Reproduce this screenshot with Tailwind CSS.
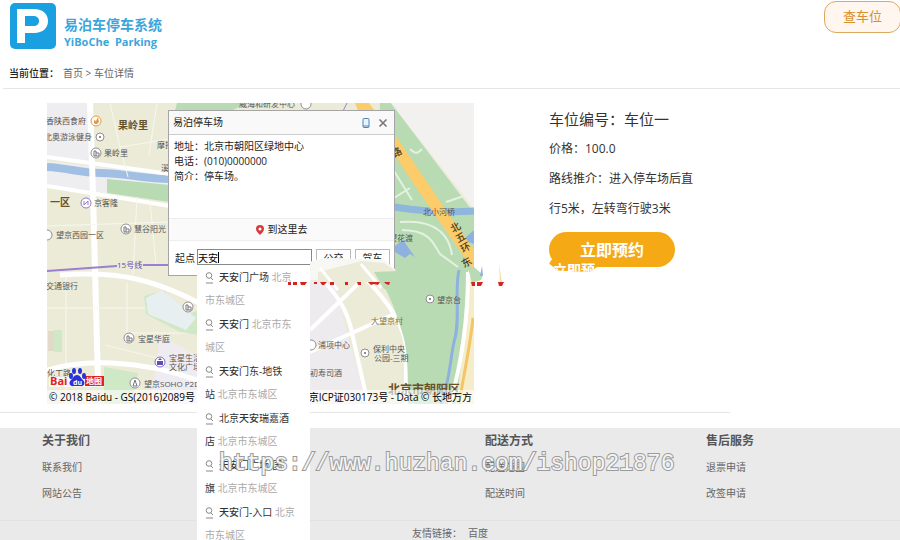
<!DOCTYPE html>
<html lang="zh-CN">
<head>
  <meta charset="UTF-8">
  <meta name="viewport" content="width=device-width, initial-scale=1.0">
  <title>易泊车停车系统</title>
  <script src="https://cdn.jsdelivr.net/npm/@tailwindcss/browser@4"></script>
</head>
<body class="bg-white text-[#333] font-['Open_Sans','Noto_Sans_CJK_SC',sans-serif]">
<div class="relative h-screen overflow-hidden">

  <!-- header -->
  <header class="flex items-start justify-between pl-2.5">
    <a href="#" class="flex items-center gap-2 pt-0.5">
      <svg class="h-[46px] w-[46px]" viewBox="0 0 46 46">
        <rect width="46" height="46" rx="5" fill="#1a9fe0"/>
        <path fill="#fff" fill-rule="evenodd" d="M7 6h17c9 0 14 5 14 12S33 30 24 30h-9v10H7zM15 13v10h8c4 0 6-2 6-5S27 13 23 13z"/>
      </svg>
      <span class="flex flex-col pt-3.5 text-[#3aa6dc]">
        <span class="text-sm leading-[18px] font-bold">易泊车停车系统</span>
        <span class="text-[11px] leading-4 font-bold whitespace-pre">YiBoChe  Parking</span>
      </span>
    </a>
    <button class="-mr-px mt-px h-8 w-[77px] rounded-xl border border-[#dba860] bg-[#fef6ef] text-[13px] text-[#d98d2b]">查车位</button>
  </header>

  <nav class="ml-[3px] mt-3.5 flex h-[25px] gap-1 border-b border-[#e6e6e6] pl-1.5 text-[10px] leading-[18px]">
    <span class="font-medium text-[#222]">当前位置：</span>
    <span class="text-[#666]"><a href="#">首页</a> &gt; <a href="#">车位详情</a></span>
  </nav>

  <main class="flex pt-3.5 pl-[47px]">
    <!-- map -->
    <div class="relative z-10 h-[301px] w-[427px] shrink-0">
      <svg class="block h-full w-full" viewBox="47 103 427 301">
        <rect x="47" y="103" width="427" height="301" fill="#ecebd8"/>
        <path fill="#eeedf0" d="M47 103h43l2 60-45-5zM47 161l122 14v26L47 186z"/>
        <path fill="#b9dbb4" d="M177 103h70l-16 8h-56zM107 179l63 6v17l-63-9z"/>
        <path fill="none" stroke="#a1bfe3" stroke-width="8" d="M47 167c22 1 32 6 54 6s44 6 69 6"/>
        <path fill="none" stroke="#fff" stroke-width="4" d="M47 157l123 17M47 186l123 20"/>
        <path fill="none" stroke="#fff" stroke-width="6" d="M90 103l3 90 5 190"/>
        <path fill="none" stroke="#f8f7ef" stroke-width="1" d="M110 103l10 44 50-8M120 147l8 30M157 103l-8 52M47 226l123-4M137 197l-4 78M150 201l6 64M47 308h150M66 275v130M127 283v50h60M105 345l80 20"/>
        <path fill="#cfe9c6" d="M144 296l20-6 18 26 24-8v28l-26-4-34-18zM54 330h8v22h-8zM104 367l34 6-6 31h-28z"/>
        <path fill="#e8eff0" d="M146 298l16-8 34 28-10 12-38-16z"/>
        <path fill="#e2d9c8" d="M48 331h6v20h-6z"/>
        <path fill="#eeecf1" d="M160 335l50 28v41h-60z"/>
        <path fill="none" stroke="#fff" stroke-width="5" d="M47 370c34-10 88-12 150 10M60 275c60-4 96 4 150 34"/>
        <path fill="none" stroke="#9b7fd0" stroke-width="2" d="M47 271l70-5M143 265h54"/>

        <!-- park, river and ring road -->
        <path fill="#edebee" d="M310 275h22l34 129h-56z"/>
        <path fill="none" stroke="#fff" stroke-width="4" d="M320 278c22 20 30 40 34 64l14 62M310 352l84-38M310 330l50-48M362 275c24 24 44 50 44 76v53"/>
        <path fill="#b9dbb4" d="M380 103h11l83 110v191h-66c0-28 0-56-6-72-6-22-14-40-27-62z"/>
        <path fill="#f2f1f0" d="M391 103h83v106z"/>
        <path fill="none" stroke="#8fb6dc" stroke-width="7" d="M394 207c26 4 52 6 80 4"/>
        <path fill="#8fb1df" d="M395 246l8-6 12 17-5-3-5 4-10-6zM463 240l11-10v14z"/>
        <path fill="none" stroke="#8fb1df" stroke-width="3" d="M459 270c-5 22 2 50-5 72-4 18-4 38-13 62"/>
        <path fill="none" stroke="#e4f1df" stroke-width="2" d="M394 171l18 29M394 198l16-10M400 222c24-2 48 4 52 33M402 230c30 0 32 16 38 24l18 13M410 149c6 6 8 4 12 0M446 202l18-6"/>
        <path fill="none" stroke="#fbcc69" stroke-width="12" d="M390 138l50 74 38 54"/>
        <path fill="#f5edc9" d="M468 270h6v134h-18c6-40 10-90 12-134z"/>
        <path fill="none" stroke="#fff" stroke-width="4" d="M468 272c0 44-6 90-18 132"/>
        <path fill="none" stroke="#f4c567" stroke-width="3" d="M473 318c-3 30-10 60-14 86"/>
        <path fill="#fbcc69" d="M355 103h14l6 8h-17z"/>
        <path fill="none" stroke="#9b7fd0" stroke-width="1" d="M347 103l-4 8"/>

        <!-- place markers -->
        <g fill="#fff" stroke="#918f8f">
          <circle cx="96" cy="121" r="5" stroke="#e09a4b"/>
          <circle cx="100" cy="137" r="4"/>
          <circle cx="96" cy="153" r="5"/>
          <circle cx="86" cy="203" r="5" stroke="#8f7cc4"/>
          <circle cx="126" cy="229" r="5"/>
          <circle cx="47" cy="235" r="5"/>
          <circle cx="129" cy="338" r="5"/>
          <circle cx="188" cy="307" r="5"/>
          <circle cx="160" cy="362" r="5" stroke="#7c6cc0"/>
          <circle cx="135" cy="383" r="5"/>
          <circle cx="311" cy="345" r="5"/>
          <circle cx="365" cy="353" r="4"/>
          <circle cx="430" cy="299" r="4"/>
          <circle cx="306" cy="104" r="5"/>
        </g>
        <g fill="none" stroke="#77767a">
          <path d="M94 156v-5h2v5M96 153h3v3h-5M124 232v-5h2v5M126 229h3v3h-5M127 341v-5h2v5M129 338h3v3h-5M186 310v-5h2v5M188 307h3v3h-5M133 386l2-6 2 6z"/>
          <path stroke="#8f7cc4" d="M84 201v4l4-4v4"/>
        </g>
        <path fill="#e09a4b" d="M94 123v-3l2 1 2-4 1 5-2 2h-2z"/>
        <path fill="#5e50ae" d="M157 361h6v4h-6zM158 360l2-2 2 2z"/>
        <g fill="#666"><circle cx="100" cy="137" r="1"/><circle cx="365" cy="353" r="1"/><circle cx="430" cy="299" r="1"/></g>

        <g class="text-[8px]" fill="#555">
          <text x="46" y="124">香陕西食府</text>
          <text x="44" y="140">北奥游泳健身</text>
          <text x="104" y="156">果岭里</text>
          <text x="94" y="206">京客隆</text>
          <text x="134" y="232">慧谷阳光</text>
          <text x="56" y="238">望京西园一区</text>
          <text x="157" y="148">摩托</text>
          <text x="161" y="171">溪谷</text>
          <text x="239" y="107">威海和研发中心</text>
          <text x="46" y="289">交通银行</text>
          <text x="138" y="342">宝星华庭</text>
          <text x="169" y="361">宝星生活</text>
          <text x="169" y="370">文化广场</text>
          <text x="144" y="387">望京SOHO P2D</text>
          <text x="47" y="376">化工路</text>
          <text x="318" y="348">浦项中心</text>
          <text x="310" y="376">初寿司酒</text>
          <text x="373" y="352">保利中央</text>
          <text x="374" y="361">公园-三期</text>
          <text x="437" y="303">望京台</text>
          <text x="423" y="215">北小河桥</text>
          <text x="389" y="241">望花渡</text>
          <text x="371" y="324" fill="#8a7436">大望京村</text>
          <text x="117" y="268" fill="#6a4db0">15号线</text>
        </g>
        <g class="text-[10px] font-bold" fill="#67522a">
          <text x="118" y="129">果岭里</text>
          <text x="50" y="206">一区</text>
          <text x="388" y="394" class="text-xs">北京市朝阳区</text>
        </g>
        <g class="text-[10px] font-medium" fill="#4c3b1c">
          <text transform="translate(394 158) rotate(-30)">路</text>
          <text transform="translate(453 233) rotate(-30)">北</text>
          <text transform="translate(458 243) rotate(-30)">五</text>
          <text transform="translate(463 253) rotate(-30)">环</text>
          <text transform="translate(464 268) rotate(-30)">东</text>
        </g>

        <!-- map provider logo -->
        <g>
          <rect x="49" y="376" width="55" height="11" fill="#fff" fill-opacity="0.7"/>
          <rect x="85" y="376" width="19" height="10" fill="#e0231d"/>
          <text x="50" y="385" class="text-[11px] font-bold" fill="#e0231d">Bai</text>
          <text x="86" y="384" class="text-[8px] font-bold" fill="#fff">地图</text>
          <g fill="#2b32d6">
            <ellipse cx="74" cy="371" rx="2" ry="3"/>
            <ellipse cx="80" cy="371" rx="2" ry="3"/>
            <ellipse cx="71" cy="376" rx="2" ry="3"/>
            <ellipse cx="84" cy="376" rx="2" ry="3"/>
            <path d="M77 375c3 0 4 3 6 5 3 3 1 7-3 6h-6c-4 1-6-3-3-6 2-2 3-5 6-5z"/>
          </g>
          <text x="73" y="385" class="text-[7px] font-bold" fill="#fff">du</text>
        </g>
      </svg>

      <div class="absolute inset-x-0 bottom-0 flex h-3.5 justify-between bg-white/60 px-0.5 text-[10px] leading-3.5 whitespace-nowrap text-black">
        <span>© 2018 Baidu - GS(2016)2089号</span>
        <span>京ICP证030173号 - Data © 长地万方</span>
      </div>

      <!-- info window -->
      <section class="absolute top-[7px] left-[121px] h-[166px] w-[227px] border border-[#a5a5a5] bg-white text-[10px] text-[#222]">
        <div class="flex h-6 items-center border-b border-[#ccc] bg-[#f9f9f9] px-1">
          <h2 class="grow">易泊停车场</h2>
          <button class="mr-2" aria-label="发送到手机">
            <svg class="h-2.5 w-2" viewBox="0 0 8 10"><rect x="1" y=".5" width="6" height="9" rx="1" fill="#eaf4ff" stroke="#4f83bb"/><path d="M1 8h6" stroke="#4f83bb"/></svg>
          </button>
          <button class="mr-0.5" aria-label="关闭">
            <svg class="h-2.5 w-2.5" viewBox="0 0 10 10"><path d="M1.500 1.500l7 7m0-7l-7 7" stroke="#777" stroke-width="1.600"/></svg>
          </button>
        </div>
        <div class="h-[83px] px-[5px] pt-1 leading-[15px]">
          <p>地址：北京市朝阳区绿地中心</p>
          <p>电话：(010)0000000</p>
          <p>简介：停车场。</p>
        </div>
        <button class="flex h-[23px] w-full items-center justify-center gap-1 border-y border-[#eee] bg-[#fafafa]">
          <svg class="h-2.5 w-2" viewBox="0 0 8 10"><path fill="#d9383c" d="M4 0a4 4 0 014 4c0 2-2 4-4 6C2 8 0 6 0 4a4 4 0 014-4z"/><circle cx="4" cy="4" r="1.500" fill="#fff"/></svg>
          到这里去
        </button>
        <form class="flex items-start gap-1 pt-2 pl-1.5">
          <label for="start" class="-mr-0.5 leading-[18px]">起点</label>
          <input id="start" type="text" value="天安" class="h-4 w-[115px] border border-[#888] bg-white text-black">
          <button type="button" class="h-[18px] w-[35px] border border-[#bbb] leading-4">公交</button>
          <button type="button" class="h-[18px] w-[35px] border border-[#bbb] leading-4">驾车</button>
        </form>
        <div class="absolute top-[141px] left-[49px] h-[11px] w-px bg-black"></div>
      </section>

      <!-- ragged map strip over the info window -->
      <svg class="pointer-events-none absolute inset-0 h-full w-full overflow-visible" viewBox="47 103 427 301">
        <path fill="#f7f8f4" d="M310 262c6-3 14-4 26-4l22 1h26l5 5 6 5 2 11h-87z"/>
        <path fill="#ecebd8" d="M318 272l44-11 22 2 13 9v10h-79z"/>
        <path fill="#b9dbb4" d="M374 272l24-1v18h-14zM468 268l6-1 9 8-2 5-9 3z"/>
        <path fill="none" stroke="#fff" stroke-width="3" d="M320 268l18 22M361 264l20 24"/>
        <path fill="#8fb1df" d="M480 276l2-10 1 10z"/>
        <path fill="#f7dfa4" d="M500 282l-1-18 3 18z"/>
      </svg>

      <!-- suggestions -->
      <ul class="absolute top-[163px] left-[150px] w-[113px] bg-white px-2 text-[10px] leading-[23px] whitespace-nowrap text-[#aaa]">
        <li class="h-[47px]"><svg class="mr-1.5 inline h-3 w-2" viewBox="0 0 8 12" fill="none" stroke="#888"><circle cx="4" cy="3.500" r="2.800"/><path d="M6 6l2 2M1 11h7"/></svg><span class="text-[#333]"><b class="font-medium">天安</b>门广场</span> 北京<br>市东城区</li>
        <li class="h-[47px]"><svg class="mr-1.5 inline h-3 w-2" viewBox="0 0 8 12" fill="none" stroke="#888"><circle cx="4" cy="3.500" r="2.800"/><path d="M6 6l2 2M1 11h7"/></svg><span class="text-[#333]"><b class="font-medium">天安</b>门</span> 北京市东<br>城区</li>
        <li class="h-[47px]"><svg class="mr-1.5 inline h-3 w-2" viewBox="0 0 8 12" fill="none" stroke="#888"><circle cx="4" cy="3.500" r="2.800"/><path d="M6 6l2 2M1 11h7"/></svg><span class="text-[#333]"><b class="font-medium">天安</b>门东-地铁<br>站</span> 北京市东城区</li>
        <li class="h-[47px]"><svg class="mr-1.5 inline h-3 w-2" viewBox="0 0 8 12" fill="none" stroke="#888"><circle cx="4" cy="3.500" r="2.800"/><path d="M6 6l2 2M1 11h7"/></svg><span class="text-[#333]">北京<b class="font-medium">天安</b>瑞嘉酒<br>店</span> 北京市东城区</li>
        <li class="h-[47px]"><svg class="mr-1.5 inline h-3 w-2" viewBox="0 0 8 12" fill="none" stroke="#888"><circle cx="4" cy="3.500" r="2.800"/><path d="M6 6l2 2M1 11h7"/></svg><span class="text-[#333]"><b class="font-medium">天安</b>门广场-国<br>旗</span> 北京市东城区</li>
        <li class="h-[47px]"><svg class="mr-1.5 inline h-3 w-2" viewBox="0 0 8 12" fill="none" stroke="#888"><circle cx="4" cy="3.500" r="2.800"/><path d="M6 6l2 2M1 11h7"/></svg><span class="text-[#333]"><b class="font-medium">天安</b>门-入口</span> 北京<br>市东城区</li>
      </ul>

      <!-- red banner remains -->
      <svg class="pointer-events-none absolute inset-0 h-full w-full overflow-visible" viewBox="47 103 427 301">
        <path fill="#d32620" d="M288 282h3v3h-3zM293 282h4v3h-4zM300 282h7l-2 3h-4zM314 282h3v2h-3zM320 282h7l-3 3h-2zM330 282h4v3h-4zM345 282h3v3h-3zM357 282h4v3h-3zM368 282h12l-2 3-4-1-3 1zM384 282h6l-1 3-3-1zM471 282h4v4h-3zM477 282h6l-2 4h-4zM498 282h6l-2 4h-3z"/>
      </svg>
    </div>

    <!-- parking space details -->
    <div class="ml-[75px] pt-px text-xs leading-[30px]">
      <h1 class="text-[15px]">车位编号：车位一</h1>
      <p class="leading-[30px]">价格：100.0</p>
      <p class="leading-[30px]">路线推介：进入停车场后直<br>行5米，左转弯行驶3米</p>
      <div class="relative mt-2">
        <button class="block h-[35px] w-[126px] rounded-full bg-[#f4a915] text-base font-bold text-white">立即预约</button>
        <div class="absolute top-[26px] left-0 h-3.5 w-12 overflow-hidden rounded-tl-lg bg-[#f4a915] pl-1 text-sm leading-6 font-bold whitespace-nowrap text-white [clip-path:polygon(0_0,100%_0,100%_65%,85%_100%,18%_90%,0_40%)]">立即预</div>
      </div>
    </div>
  </main>

  <div class="mt-2 w-[730px] border-t border-[#e6e6e6]"></div>

  <footer class="mt-[15px] h-40 bg-[#eaeaea] text-[10px] text-[#666]">
    <div class="flex h-[93px] border-b border-[#e2e2e2] pl-[42px] leading-[26px]">
      <div class="w-[443px]">
        <h3 class="text-xs/[26px] font-bold text-[#555]">关于我们</h3>
        <a href="#" class="block">联系我们</a>
        <a href="#" class="block">网站公告</a>
      </div>
      <div class="w-[221px]">
        <h3 class="text-xs/[26px] font-bold text-[#555]">配送方式</h3>
        <a href="#" class="block">配送范围</a>
        <a href="#" class="block">配送时间</a>
      </div>
      <div>
        <h3 class="text-xs/[26px] font-bold text-[#555]">售后服务</h3>
        <a href="#" class="block">退票申请</a>
        <a href="#" class="block">改签申请</a>
      </div>
    </div>
    <p class="flex justify-center gap-1.5 pt-0.5 leading-5">友情链接： <a href="#">百度</a></p>
  </footer>

  <!-- watermark -->
  <div class="pointer-events-none absolute top-[448px] left-[219px] z-20 font-['Liberation_Mono',monospace] text-[23px] leading-8 whitespace-nowrap text-[#f4f4f4] [-webkit-text-stroke:2px_#9a9a9a] [paint-order:stroke_fill]">https://www.huzhan.com/ishop21876</div>
</div>
</body>
</html>
